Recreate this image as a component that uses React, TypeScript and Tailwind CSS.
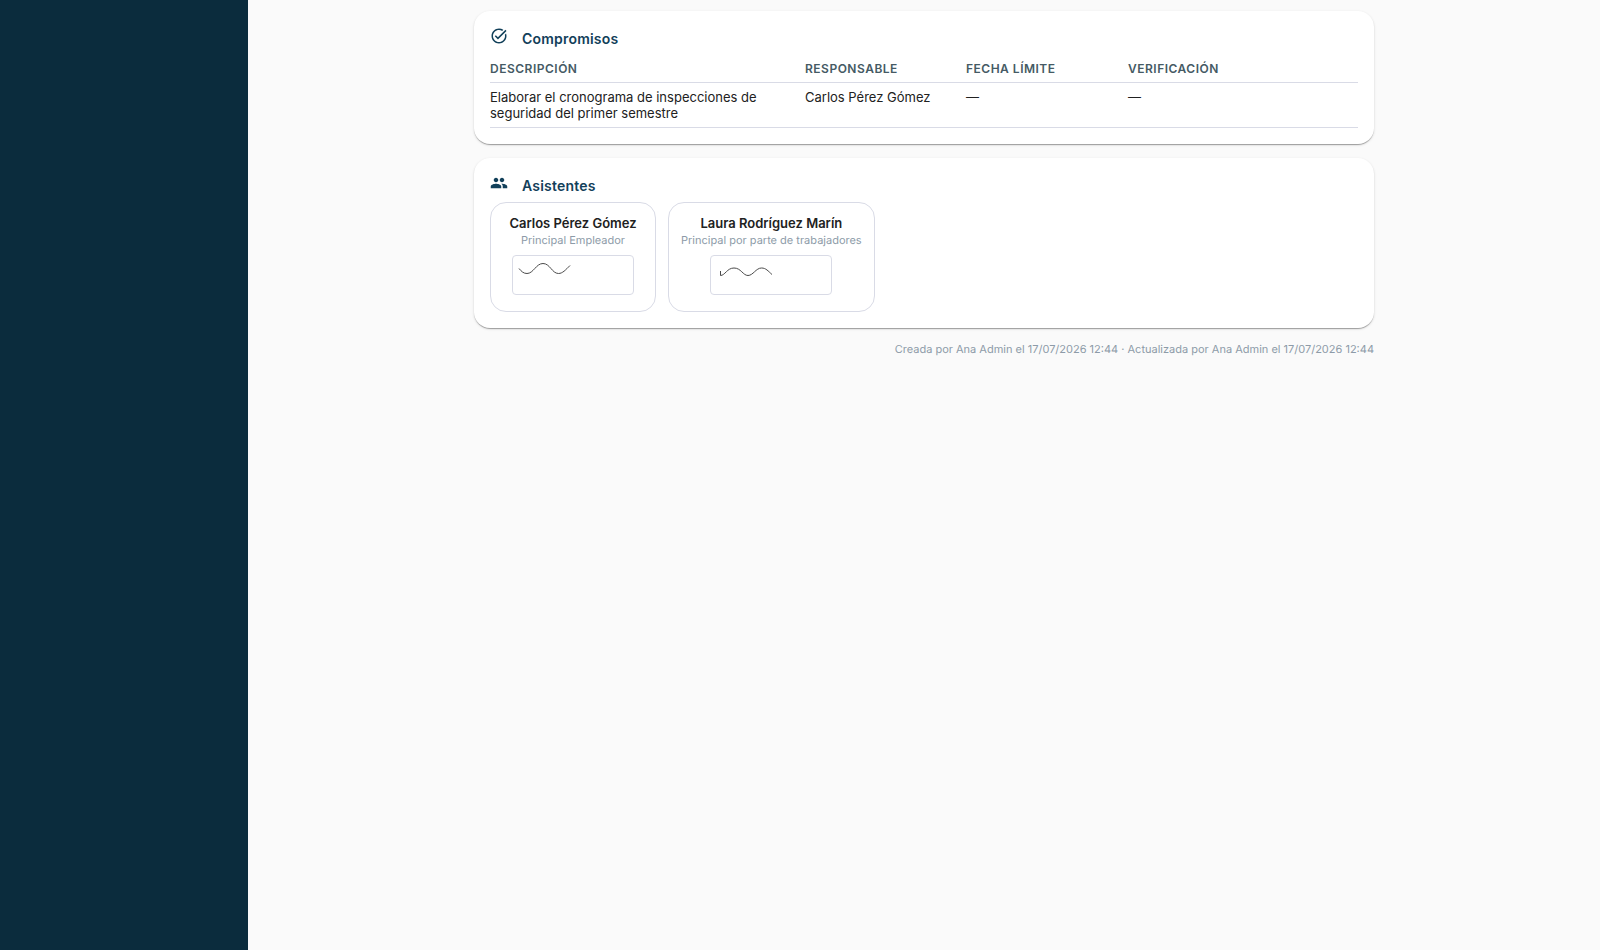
import type { ReactNode } from 'react'
import type { IconType } from 'react-icons'
import { MdPeople, MdTaskAlt } from 'react-icons/md'

interface Commitment {
  id: string
  description: string
  owner: string
  dueDate?: string
  verification?: string
}

interface Attendee {
  id: string
  name: string
  role: string
  signature: string
}

const commitments: Commitment[] = [
  {
    id: '1',
    description: 'Elaborar el cronograma de inspecciones de seguridad del primer semestre',
    owner: 'Carlos Pérez Gómez',
  },
]

const attendees: Attendee[] = [
  {
    id: '1',
    name: 'Carlos Pérez Gómez',
    role: 'Principal Empleador',
    signature: 'M6 12.5C8.5 15.5 10.5 17.5 14 17.5C20.5 17.5 23 7.5 30 7.5C37 7.5 39 17.5 45.5 17.5C49.5 17.5 52.5 14 57 9.5',
  },
  {
    id: '2',
    name: 'Laura Rodríguez Marín',
    role: 'Principal por parte de trabajadores',
    signature: 'M9.5 15V19.5C14 19.5 16 12 23 12C30 12 32 19.5 37 19.5C42 19.5 45 12 50.5 12C55 12 57 15 61 18.5',
  },
]

function SectionCard({ icon: Icon, title, children }: { icon: IconType; title: string; children: ReactNode }) {
  return (
    <section className="rounded-2xl bg-white p-4 shadow-[0_2px_1px_-1px_rgba(0,0,0,0.2),0_1px_1px_0_rgba(0,0,0,0.14),0_1px_3px_0_rgba(0,0,0,0.12)]">
      <div className="flex items-start gap-3.5 text-[#12405a]">
        <Icon className="size-[18px]" aria-hidden />
        <h2 className="text-sm leading-6 font-semibold tracking-[0.2px]">{title}</h2>
      </div>
      {children}
    </section>
  )
}

function CommitmentsTable() {
  const head = 'pt-2.5 pb-[5px] text-xs leading-4 font-semibold tracking-[0.5px] text-[#455a64] uppercase'
  const cell = 'py-1.5 pr-3 align-top'

  return (
    <table className="w-full table-fixed border-collapse text-left text-[13px] leading-4 text-[#212121]">
      <thead>
        <tr className="border-b border-[#d9dbe6]">
          <th className={`${head} w-[315px]`}>Descripción</th>
          <th className={`${head} w-[161px]`}>Responsable</th>
          <th className={`${head} w-[162px]`}>Fecha límite</th>
          <th className={head}>Verificación</th>
        </tr>
      </thead>
      <tbody>
        {commitments.map((item) => (
          <tr key={item.id} className="border-b border-[#d9dbe6]">
            <td className={cell}>{item.description}</td>
            <td className={cell}>{item.owner}</td>
            <td className={cell}>{item.dueDate ?? '—'}</td>
            <td className={cell}>{item.verification ?? '—'}</td>
          </tr>
        ))}
      </tbody>
    </table>
  )
}

function AttendeeCard({ attendee }: { attendee: Attendee }) {
  return (
    <li className="flex min-w-[166px] flex-col items-center rounded-2xl border border-[#d9dbe6] px-3 pt-3 pb-4 text-center">
      <span className="text-[13px] leading-4 font-semibold text-[#212121]">{attendee.name}</span>
      <span className="mt-0.5 text-[11px] leading-[14px] text-[#8d9ba8] [text-rendering:geometricPrecision]">{attendee.role}</span>
      <div className="mt-2 h-10 w-[122px] rounded border border-[#d9dbe6] bg-white">
        <svg viewBox="0 0 120 38" className="size-full" fill="none" stroke="#4a4a4a" role="img" aria-label={`Firma de ${attendee.name}`}>
          <path d={attendee.signature} />
        </svg>
      </div>
    </li>
  )
}

export default function App() {
  return (
    <div className="flex min-h-screen bg-[#fafafa] font-[Inter,sans-serif]">
      <aside className="w-62 shrink-0 bg-[#0b2c3d]" />
      <main className="flex-1 px-6 pt-[11px] pb-6">
        <div className="mx-auto flex max-w-[900px] flex-col gap-3.5">
          <SectionCard icon={MdTaskAlt} title="Compromisos">
            <CommitmentsTable />
          </SectionCard>

          <SectionCard icon={MdPeople} title="Asistentes">
            <ul className="mt-1 flex flex-wrap gap-3">
              {attendees.map((attendee) => (
                <AttendeeCard key={attendee.id} attendee={attendee} />
              ))}
            </ul>
          </SectionCard>

          <p className="text-right text-[11px] leading-[14px] text-[#8d9ba8] [text-rendering:geometricPrecision]">
            Creada por Ana Admin el 17/07/2026 12:44 · Actualizada por Ana Admin el 17/07/2026 12:44
          </p>
        </div>
      </main>
    </div>
  )
}
